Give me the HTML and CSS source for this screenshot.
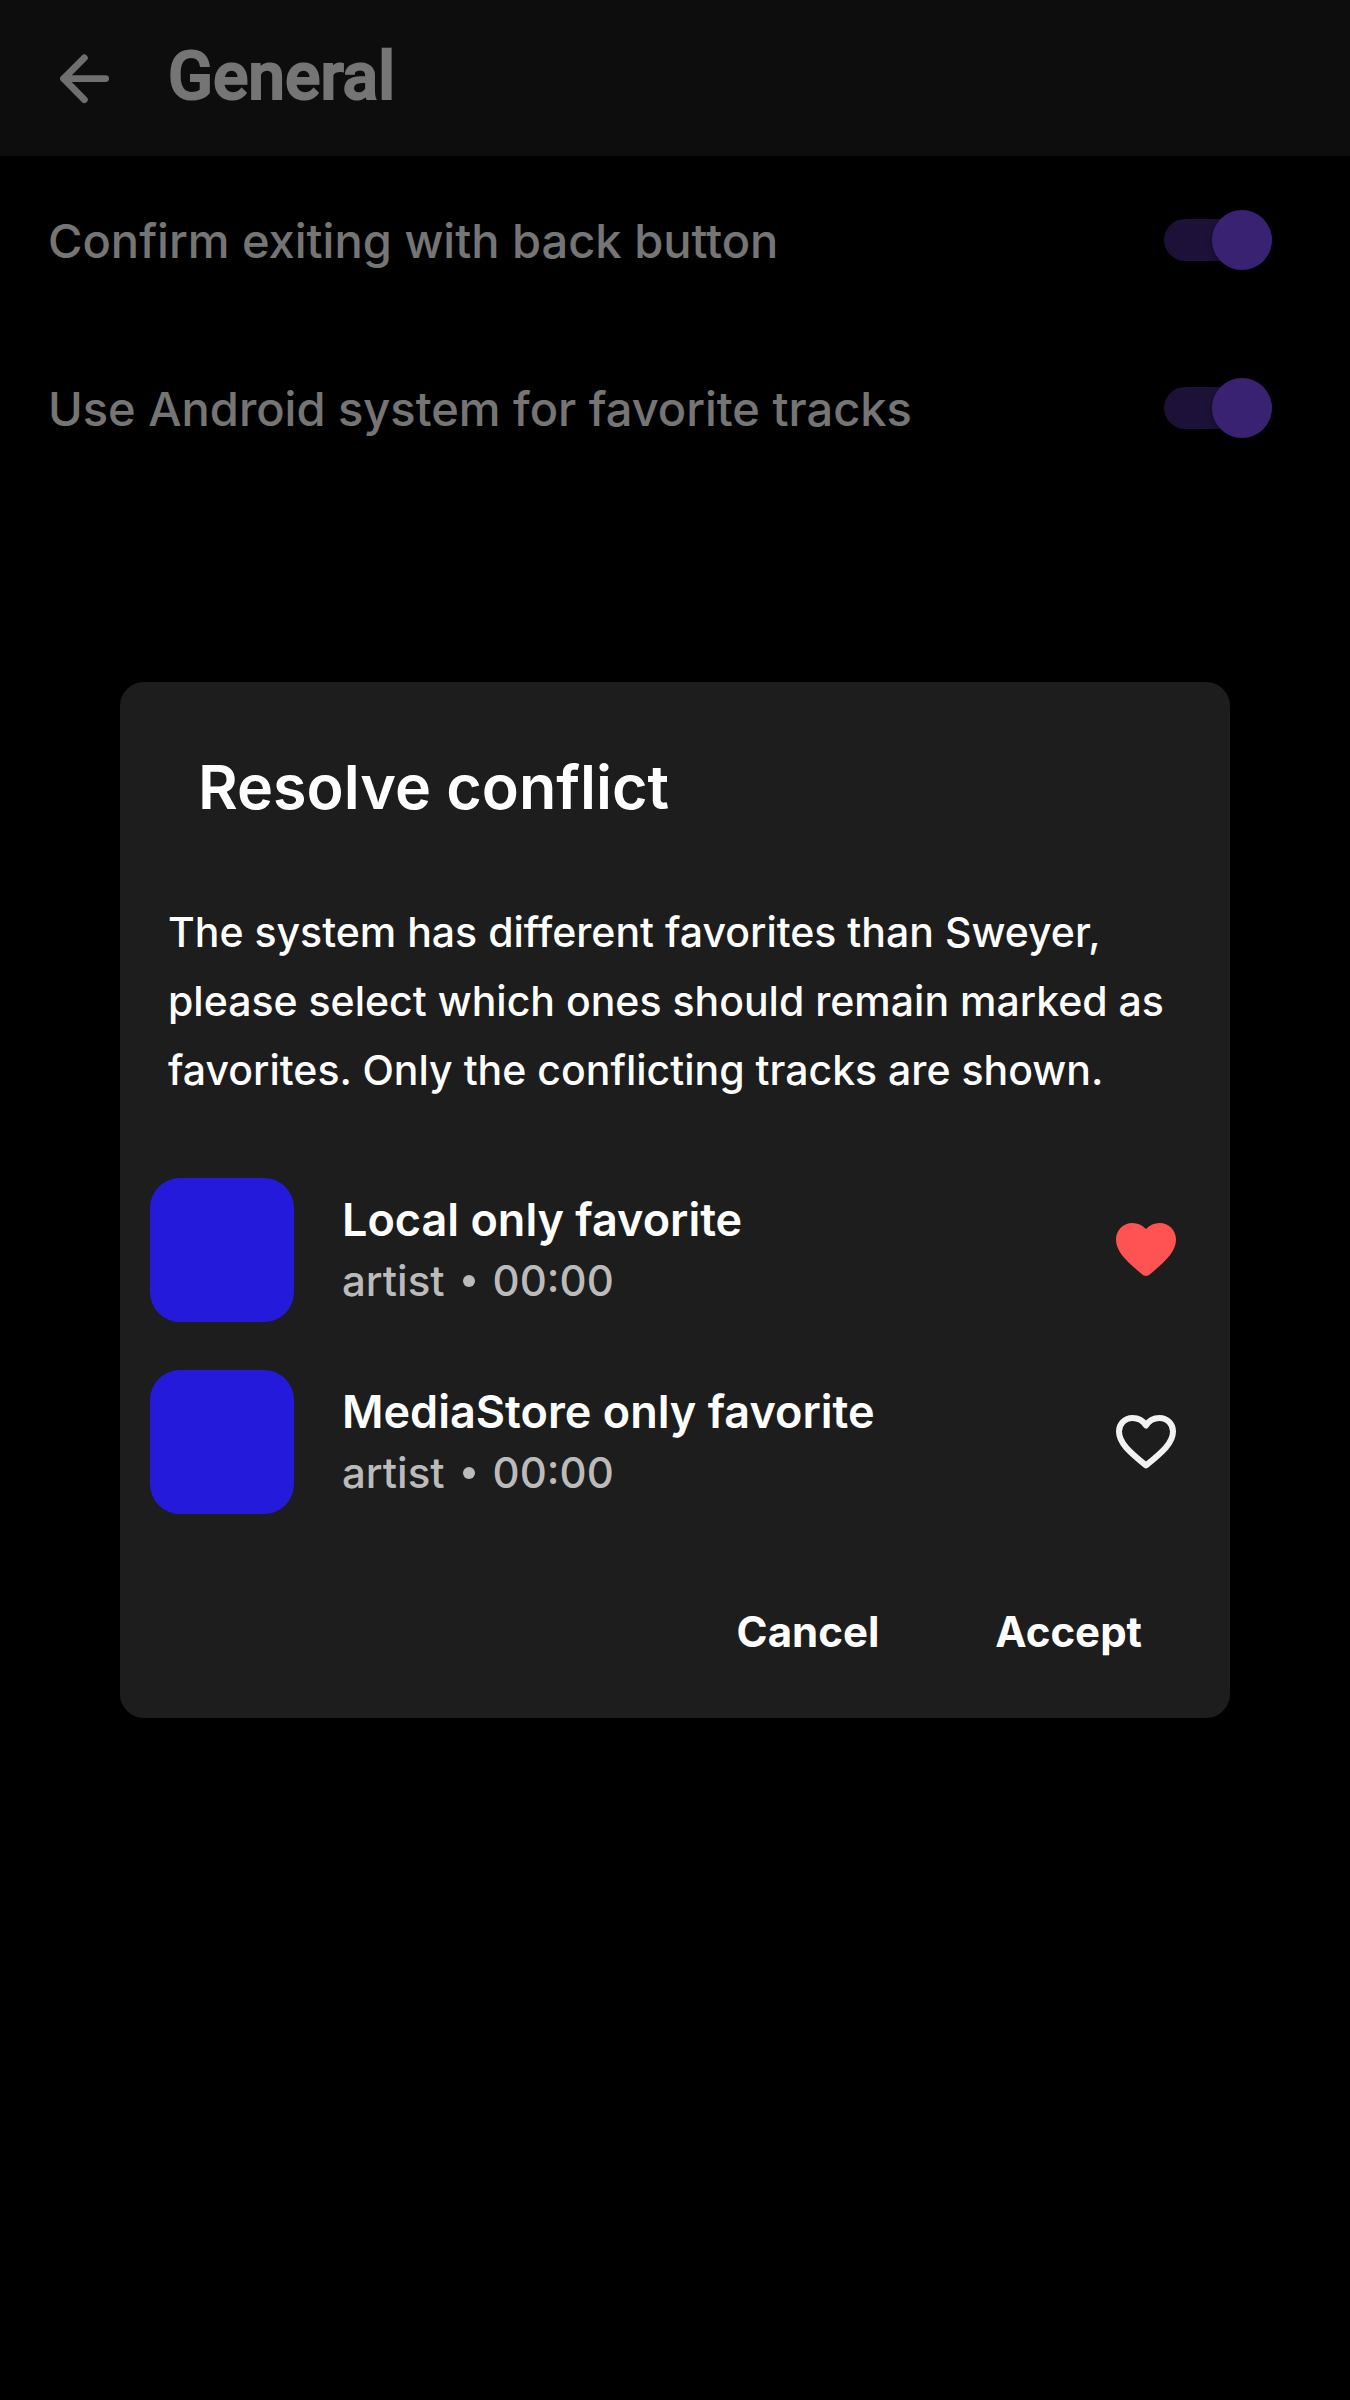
FILE: index.html
```html
<!DOCTYPE html>
<html lang="en">
<head>
  <meta charset="utf-8">
  <meta name="viewport" content="width=device-width, initial-scale=1">
  <title>General</title>
  <link rel="stylesheet" href="styles.css">
</head>
<body>
  <header class="app-bar">
    <button class="icon-button" type="button" aria-label="Back">
      <svg class="icon" viewBox="0 0 24 24" aria-hidden="true">
        <path class="arrow" d="M12.100 5.300 5.200 12.200l6.900 7M5.200 12.200H19.200"/>
      </svg>
    </button>
    <h1 class="app-title">General</h1>
  </header>

  <main class="settings">
    <label class="setting">
      <span>Confirm exiting with back button</span>
      <input class="switch" type="checkbox" role="switch" checked>
    </label>
    <label class="setting">
      <span>Use Android system for favorite tracks</span>
      <input class="switch" type="checkbox" role="switch" checked>
    </label>
  </main>

  <div class="scrim">
    <section class="dialog" role="dialog" aria-modal="true" aria-labelledby="dialog-title">
      <h2 class="dialog-title" id="dialog-title">Resolve conflict</h2>
      <p class="dialog-text">The system has different favorites than Sweyer, please select which ones should remain marked as favorites. Only the conflicting tracks are shown.</p>
      <ul class="tracks">
        <li class="track">
          <div class="art"></div>
          <div class="track-info">
            <div class="track-title">Local only favorite</div>
            <div class="track-meta"><span>artist</span><i class="dot"></i><span>00:00</span></div>
          </div>
          <button class="icon-button" type="button" aria-label="Remove from favorites" aria-pressed="true">
            <svg class="icon" viewBox="0 0 24 24" aria-hidden="true">
              <path class="heart-full" d="M12 5C10.800 3.700 9.200 3 7.500 3C4.400 3 2 5.400 2 8.500C2 12.300 5 15.400 10.800 20.200C11.400 20.850 12.600 20.850 13.200 20.200C19 15.400 22 12.300 22 8.500C22 5.400 19.600 3 16.500 3C14.800 3 13.200 3.700 12 5Z"/>
            </svg>
          </button>
        </li>
        <li class="track">
          <div class="art"></div>
          <div class="track-info">
            <div class="track-title">MediaStore only favorite</div>
            <div class="track-meta"><span>artist</span><i class="dot"></i><span>00:00</span></div>
          </div>
          <button class="icon-button" type="button" aria-label="Add to favorites" aria-pressed="false">
            <svg class="icon" viewBox="0 0 24 24" aria-hidden="true">
              <path class="heart-line" d="M12 6.500C11 4.800 9.300 4 7.500 4C4.950 4 3 6 3 8.500C3 12.300 6.500 15.300 12 19.800C17.500 15.300 21 12.300 21 8.500C21 6 19.050 4 16.500 4C14.700 4 13 4.800 12 6.500Z"/>
            </svg>
          </button>
        </li>
      </ul>
      <div class="actions">
        <button class="action" type="button">Cancel</button>
        <button class="action" type="button">Accept</button>
      </div>
    </section>
  </div>
</body>
</html>
```
FILE: styles.css
```css
* {
  box-sizing: border-box;
}

body {
  margin: 0;
  min-height: 100vh;
  background: #000;
  color: #fff;
  font-family: Inter, "Noto Sans", sans-serif;
  font-weight: 500;
}

button {
  border: 0;
  padding: 0;
  background: none;
  color: inherit;
  font: inherit;
}

.icon-button,
.icon {
  display: block;
  flex: none;
  width: 72px;
  height: 72px;
}

.app-bar {
  display: flex;
  align-items: center;
  gap: 48px;
  height: 156px;
  padding: 0 48px;
  background: #1d1d1d;
}

.arrow {
  fill: none;
  stroke: #f1f2f4;
  stroke-width: 2.3;
  stroke-linecap: round;
  stroke-linejoin: round;
}

.app-title {
  margin: 0;
  padding-bottom: 2px;
  font-family: Roboto, sans-serif;
  font-size: 66px;
  font-weight: 500;
  line-height: 78px;
  -webkit-text-stroke: 2px currentColor;
}

.setting {
  display: flex;
  align-items: center;
  justify-content: space-between;
  height: 168px;
  padding: 0 78px 0 48px;
  font-size: 47px;
}

.switch {
  appearance: none;
  display: flex;
  align-items: center;
  justify-content: flex-end;
  flex: none;
  width: 108px;
  height: 42px;
  margin: 0;
  border-radius: 21px;
  background: #3f257a;
}

.switch::before {
  content: "";
  flex: none;
  width: 60px;
  height: 60px;
  border-radius: 50%;
  background: #7e4afa;
  box-shadow: 0 3px 6px rgba(0, 0, 0, 0.3);
}

.scrim {
  position: fixed;
  inset: 0;
  display: flex;
  align-items: center;
  justify-content: center;
  padding: 72px 120px;
  background: rgba(0, 0, 0, 0.54);
}

.dialog {
  flex: 1;
  padding: 66px 30px 32px;
  border-radius: 24px;
  background: #1d1d1d;
}

.dialog-title {
  margin: 0 48px 72px;
  font-size: 61px;
  font-weight: 600;
  line-height: 78px;
}

.dialog-text {
  margin: 0 18px 73px;
  font-size: 41px;
  line-height: 69px;
}

.tracks {
  display: flex;
  flex-direction: column;
  gap: 48px;
  margin: 0 0 64px;
  padding: 0;
  list-style: none;
}

.track {
  display: flex;
  align-items: center;
  gap: 48px;
  padding-right: 18px;
}

.art {
  width: 144px;
  height: 144px;
  border-radius: 30px;
  background: #241adb;
}

.track-info {
  display: flex;
  flex: 1;
  flex-direction: column;
}

.track-title {
  font-size: 45px;
  font-weight: 600;
  line-height: 61px;
}

.track-meta {
  display: flex;
  align-items: center;
  gap: 18px;
  color: #bbb;
  font-size: 42px;
  line-height: 61px;
}

.dot {
  width: 12px;
  height: 12px;
  border-radius: 50%;
  background: currentColor;
}

.heart-full {
  fill: #ff5252;
}

.heart-line {
  fill: none;
  stroke: #f1f2f4;
  stroke-width: 2;
  stroke-linejoin: round;
}

.actions {
  display: flex;
  justify-content: flex-end;
  gap: 20px;
  padding-right: 10px;
}

.action {
  padding: 0 48px;
  font-size: 42px;
  font-weight: 700;
  line-height: 108px;
}
```
